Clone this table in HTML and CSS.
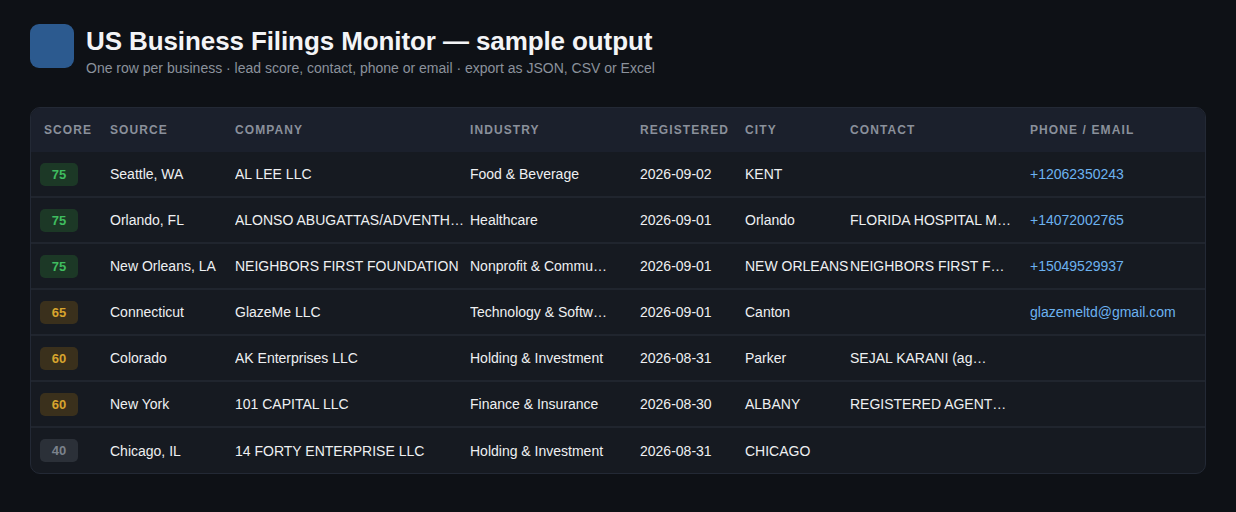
FILE: index.html
```html
<!DOCTYPE html>
<html>
<head>
<meta charset="utf-8">
<link rel="stylesheet" href="styles.css">
</head>
<body>
<div class="page">
  <header class="head">
    <div class="logo"></div>
    <div class="titles">
      <h1 class="title">US Business Filings Monitor — sample output</h1>
      <p class="sub">One row per business · lead score, contact, phone or email · export as JSON, CSV or Excel</p>
    </div>
  </header>
  <div class="card">
    <div class="row hrow">
      <div class="c c-score">Score</div>
      <div class="c">Source</div>
      <div class="c">Company</div>
      <div class="c">Industry</div>
      <div class="c">Registered</div>
      <div class="c">City</div>
      <div class="c">Contact</div>
      <div class="c">Phone / Email</div>
    </div>
    <div class="row">
      <div class="c c-score"><span class="badge hi">75</span></div>
      <div class="c">Seattle, WA</div>
      <div class="c"><span class="tr w-co">AL LEE LLC</span></div>
      <div class="c"><span class="tr w-ind">Food &amp; Beverage</span></div>
      <div class="c">2026-09-02</div>
      <div class="c">KENT</div>
      <div class="c"></div>
      <div class="c link">+12062350243</div>
    </div>
    <div class="row">
      <div class="c c-score"><span class="badge hi">75</span></div>
      <div class="c">Orlando, FL</div>
      <div class="c"><span class="tr w-co">ALONSO ABUGATTAS/ADVENTHEALTH ORLANDO</span></div>
      <div class="c"><span class="tr w-ind">Healthcare</span></div>
      <div class="c">2026-09-01</div>
      <div class="c">Orlando</div>
      <div class="c"><span class="tr w-ct">FLORIDA HOSPITAL MEDICAL CENTER</span></div>
      <div class="c link">+14072002765</div>
    </div>
    <div class="row">
      <div class="c c-score"><span class="badge hi">75</span></div>
      <div class="c">New Orleans, LA</div>
      <div class="c"><span class="tr w-co">NEIGHBORS FIRST FOUNDATION</span></div>
      <div class="c"><span class="tr w-ind">Nonprofit &amp; Community</span></div>
      <div class="c">2026-09-01</div>
      <div class="c"><span class="tr w-city">NEW ORLEANS</span></div>
      <div class="c"><span class="tr w-ct">NEIGHBORS FIRST FOUNDATION</span></div>
      <div class="c link">+15049529937</div>
    </div>
    <div class="row">
      <div class="c c-score"><span class="badge mid">65</span></div>
      <div class="c">Connecticut</div>
      <div class="c"><span class="tr w-co">GlazeMe LLC</span></div>
      <div class="c"><span class="tr w-ind">Technology &amp; Software</span></div>
      <div class="c">2026-09-01</div>
      <div class="c">Canton</div>
      <div class="c"></div>
      <div class="c link">glazemeltd@gmail.com</div>
    </div>
    <div class="row">
      <div class="c c-score"><span class="badge mid">60</span></div>
      <div class="c">Colorado</div>
      <div class="c"><span class="tr w-co">AK Enterprises LLC</span></div>
      <div class="c"><span class="tr w-ind">Holding &amp; Investment</span></div>
      <div class="c">2026-08-31</div>
      <div class="c">Parker</div>
      <div class="c"><span class="tr w-ct2">SEJAL KARANI (agent)</span></div>
      <div class="c link"></div>
    </div>
    <div class="row">
      <div class="c c-score"><span class="badge mid">60</span></div>
      <div class="c">New York</div>
      <div class="c"><span class="tr w-co">101 CAPITAL LLC</span></div>
      <div class="c"><span class="tr w-ind">Finance &amp; Insurance</span></div>
      <div class="c">2026-08-30</div>
      <div class="c">ALBANY</div>
      <div class="c"><span class="tr w-ct">REGISTERED AGENTS INC.</span></div>
      <div class="c link"></div>
    </div>
    <div class="row last">
      <div class="c c-score"><span class="badge lo">40</span></div>
      <div class="c">Chicago, IL</div>
      <div class="c"><span class="tr w-co">14 FORTY ENTERPRISE LLC</span></div>
      <div class="c"><span class="tr w-ind">Holding &amp; Investment</span></div>
      <div class="c">2026-08-31</div>
      <div class="c">CHICAGO</div>
      <div class="c"></div>
      <div class="c link"></div>
    </div>
  </div>
</div>
</body>
</html>
```
FILE: styles.css
```css
* { box-sizing: border-box; }
html, body { margin: 0; padding: 0; }
body {
  background: #0e1116;
  color: #e6e8eb;
  font-family: "Liberation Sans", Arial, Helvetica, sans-serif;
  width: 1236px;
  height: 512px;
  overflow: hidden;
}
.page { padding: 24px 30px 0 30px; }
.head { display: flex; align-items: flex-start; gap: 12px; }
.logo {
  width: 44px; height: 44px;
  border-radius: 9px;
  background: #2c5a8f;
  flex: none;
}
.titles { display: flex; flex-direction: column; }
.title {
  margin: 0;
  font-size: 26px;
  line-height: 32px;
  font-weight: 700;
  color: #f3f4f6;
  letter-spacing: -0.1px;
  margin-top: 1px;
}
.sub {
  margin: 2px 0 0 0;
  font-size: 14px;
  line-height: 18px;
  color: #8b929c;
}
.card {
  margin-top: 30px;
  width: 1176px;
  border: 1px solid #232935;
  border-radius: 10px;
  overflow: hidden;
  background: #161a21;
}
.row {
  display: grid;
  grid-template-columns: 79px 125px 235px 170px 105px 105px 180px 176px;
  height: 46px;
  align-items: center;
  border-bottom: 2px solid #20252e;
}
.row.last { border-bottom: none; height: 45px; }
.hrow {
  background: #1b202c;
  height: 44px;
  border-bottom: none;
}
.hrow .c {
  font-size: 12px;
  font-weight: 700;
  text-transform: uppercase;
  letter-spacing: 1.1px;
  color: #8a909b;
}
.c {
  font-size: 14px;
  color: #eef0f2;
  white-space: nowrap;
  min-width: 0;
}
.hrow .c-score { padding-left: 13px; }
.c-score { padding-left: 9px; }
.tr {
  display: block;
  overflow: hidden;
  text-overflow: ellipsis;
  white-space: nowrap;
}
.w-co { width: 234px; }
.w-ind { width: 142px; }
.w-city { width: 104px; }
.w-ct { width: 164px; }
.w-ct2 { width: 140px; }
.link { color: #6cb2f0; }
.badge {
  display: inline-block;
  width: 38px;
  height: 23px;
  line-height: 23px;
  text-align: center;
  border-radius: 5px;
  font-size: 13px;
  font-weight: 700;
}
.badge.hi { background: #1c3826; color: #3fbd5f; }
.badge.mid { background: #3a301c; color: #d7a42e; }
.badge.lo { background: #2b3038; color: #7b828c; }
```
